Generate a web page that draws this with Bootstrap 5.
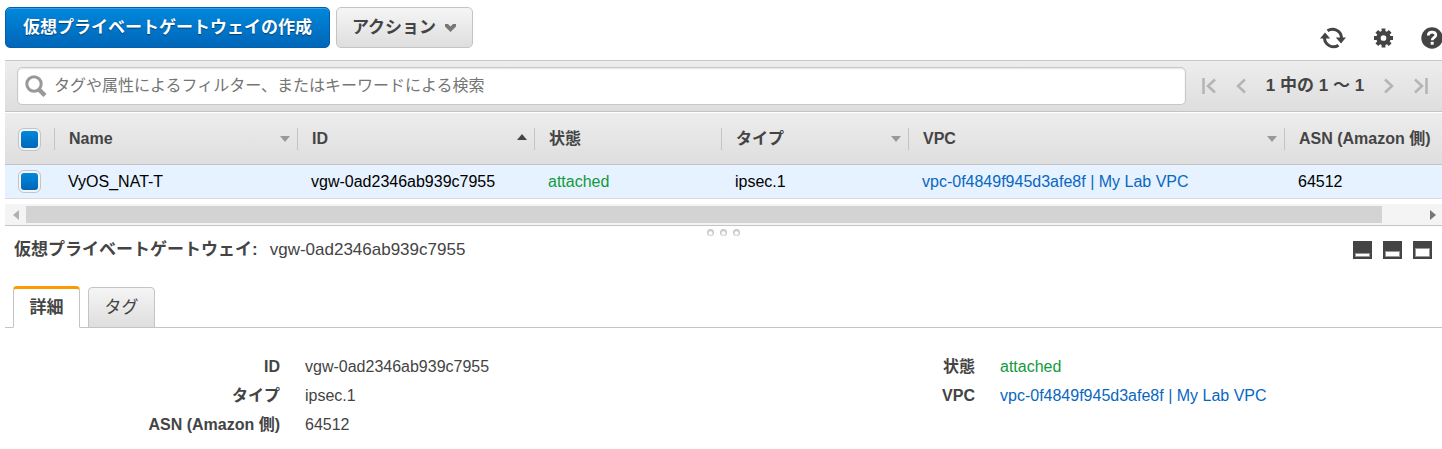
<!DOCTYPE html>
<html lang="ja">
<head>
<meta charset="utf-8">
<meta name="viewport" content="width=device-width, initial-scale=1">
<title>仮想プライベートゲートウェイ</title>
<link href="https://cdn.jsdelivr.net/npm/bootstrap@5.3.0/dist/css/bootstrap.min.css" rel="stylesheet">
<style>
  body { font-family: "Liberation Sans", "Noto Sans CJK JP", sans-serif; font-size: 16px; line-height: 22px; color: #444; background: #fff; overflow-x: hidden; }
  a { color: #0a67bf; text-decoration: none; }
  a:hover { text-decoration: underline; }
  svg { display: block; }
  .console { padding-left: 5px; }
  .topbar { padding-top: 7px; height: 60px; }
  .topbar .btn { height: 41px; font-size: 17px; font-weight: 700; line-height: 22px; border-radius: 5px; padding: 0; }
  .btn-create { width: 325px; color: #fff; background: linear-gradient(#0088dc, #0066b8); border: 1px solid #005fae; box-shadow: inset 0 1px 0 #3a9ee0; text-shadow: 0 1px 1px #00407a; }
  .btn-create:hover { color: #fff; background: #0066b8; }
  .btn-action { width: 137px; color: #444; background: linear-gradient(#f5f5f5, #dedede); border: 1px solid #c4c4c4; }
  .icon-btn { border: 0; padding: 0; background: none; color: #444; }
  .tools { gap: 28px; padding-top: 20px; }
  .filterbar { height: 52px; padding-left: 12px; background: linear-gradient(#ededed, #dedede); border-top: 1px solid #c8c8c8; border-bottom: 1px solid #c4c4c4; }
  .search-box { height: 38px; background: #fff; border: 1px solid #c8c8c8; border-radius: 5px; padding-left: 7px; gap: 7px; box-shadow: inset 0 1px 2px #e4e4e4; }
  .search-box input { border: 0; outline: 0; background: none; color: #444; padding: 0; }
  .search-box input::placeholder { color: #757575; opacity: 1; }
  .pager { width: 256px; padding: 0 14px 0 16px; font-size: 17px; font-weight: 700; }
  .pager .icon-btn { color: #b4b4b4; }
  .grid-table { table-layout: fixed; min-width: 1437px; margin-top: 1px; width: 100%; border-collapse: separate; border-spacing: 0; }
  .grid-table th { height: 52px; padding: 0; background: linear-gradient(#ededed, #dedede); border-bottom: 1px solid #c4c4c4; vertical-align: middle; }
  .grid-table td { height: 34px; padding: 0 0 0 13px; color: #000; background: #e6f2ff; border-bottom: 1px solid #d8dce2; vertical-align: middle; }
  .head-cell { height: 22px; padding: 0 7px 0 14px; border-right: 1px solid #c4c4c4; box-shadow: 1px 0 0 #fff; }
  th:last-child .head-cell { border: 0; box-shadow: none; padding-right: 0; white-space: nowrap; }
  .col-pick { width: 50px; } .col-name { width: 243px; } .col-id { width: 237px; }
  .col-mid { width: 187px; } .col-vpc { width: 376px; }
  .pick { appearance: none; display: block; width: 23px; height: 23px; margin: 0; padding: 2px; border: 1px solid #c4c4c4; border-radius: 6px; background: linear-gradient(#f4f4f4, #f4f4f4) padding-box; }
  .pick:checked { background: linear-gradient(#0088dc, #0066b8) content-box, linear-gradient(#f4f4f4, #f4f4f4) padding-box; }
  .head-cell.pick-cell, .grid-table td.pick-cell { padding-left: 13px; }
  .state-ok, .grid-table td.state-ok { color: #129a3c; }
  .scroller { height: 22px; margin-top: 5px; background: #f4f4f4; border-bottom: 1px solid #c4c4c4; }
  .scroller .icon-btn { width: 21px; }
  .scroller .icon-btn:last-child { width: 18px; }
  .thumb { width: 97%; height: 17px; background: #d3d3d3; }
  .splitter { height: 13px; gap: 6px; }
  .splitter i { width: 7px; height: 7px; border-radius: 4px; background: radial-gradient(circle at 50% 60%, #fff 1px, #c6c6c6 3px); }
  .detail-title { height: 22px; font-size: 17px; padding: 0 10px 0 9px; }
  .detail-title h1 { font-size: 17px; line-height: 22px; font-weight: 700; }
  .detail-name { gap: 12px; }
  .detail-tabs { margin-top: 25px; padding-left: 8px; gap: 8px; border-bottom: 1px solid #c4c4c4; }
  .detail-tabs .nav-link { width: 67px; height: 41px; padding: 0; text-align: center; font-size: 17px; color: #444; margin-top: 1px; margin-bottom: -1px; border: 1px solid #c4c4c4; border-radius: 4px 4px 0 0; background: linear-gradient(#f5f5f5, #dedede); }
  .detail-tabs .nav-link.active { height: 42px; margin-top: 0; font-weight: 700; color: #444; background: #fff; border-color: #c4c4c4; border-bottom-color: #fff; border-top: 3px solid #f90; }
  .detail-body { display: grid; grid-template-columns: 695fr 742fr; margin-top: 24px; }
  .detail-body dl { display: grid; grid-template-columns: 275px 1fr; column-gap: 25px; line-height: 29px; grid-auto-rows: 29px; align-content: start; }
  .detail-body dt { text-align: right; }
  .detail-body dd { margin: 0; }
</style>
</head>
<body>
<main class="console">
  <header class="topbar d-flex justify-content-between align-items-start">
    <div class="d-flex" style="gap:6px">
      <button type="button" class="btn btn-create">仮想プライベートゲートウェイの作成</button>
      <button type="button" class="btn btn-action d-flex align-items-center justify-content-center gap-2">アクション
        <svg width="13" height="9" viewBox="0 0 13 9"><path d="M1 1h3l2.500 2.500L9 1h3v2.500L6.500 9 1 3.500z" fill="#777"/></svg>
      </button>
    </div>
    <div class="tools d-flex align-items-center">
      <button type="button" class="icon-btn" aria-label="更新">
        <svg width="26" height="22" viewBox="0 0 26 22"><g fill="none" stroke="#444" stroke-width="3"><path d="M7.500 3.800A9 9 0 0 1 21.500 11"/><path d="M18.500 18.200A9 9 0 0 1 4.500 11"/></g><path d="M15.800 10.500H26l-5 6zM10.200 11.500H0l5-6z" fill="#444"/></svg>
      </button>
      <button type="button" class="icon-btn" aria-label="設定">
        <svg width="19" height="20" viewBox="0 0 20 20"><path fill="#444" fill-rule="evenodd" d="M8 0h4v2.700l1.600.7 2-1.900 2.900 2.900-1.900 2 .7 1.600H20v4h-2.700l-.7 1.600 1.900 2-2.900 2.900-2-1.900-1.600.7V20H8v-2.700l-1.600-.7-2 1.900-2.900-2.900 1.900-2L2.700 12H0V8h2.700l.7-1.600-1.900-2 2.900-2.900 2 1.900L8 2.700zM10 7a3 3 0 1 0 0 6 3 3 0 0 0 0-6z"/></svg>
      </button>
      <button type="button" class="icon-btn" aria-label="ヘルプ">
        <svg width="21" height="22" viewBox="0 0 21 22"><circle cx="11" cy="11" r="10.700" fill="#444"/><path d="M7.300 8.600C7.300 3.900 14.800 4 14.800 8c0 2.700-3.600 2.700-3.600 5.300" fill="none" stroke="#fff" stroke-width="2.800"/><path d="M9.700 14.800h3v2.900h-3z" fill="#fff"/></svg>
      </button>
    </div>
  </header>

  <section class="filterbar d-flex align-items-center">
    <label class="search-box d-flex align-items-center flex-grow-1">
      <svg width="22" height="24" viewBox="0 0 22 24"><circle cx="9" cy="10" r="7.200" fill="none" stroke="#999" stroke-width="3"/><path d="M14 15.500l6 6" stroke="#999" stroke-width="4.500"/></svg>
      <input type="search" class="flex-grow-1" aria-label="フィルター" placeholder="タグや属性によるフィルター、またはキーワードによる検索">
    </label>
    <nav class="pager d-flex align-items-center justify-content-between" aria-label="ページ">
      <button type="button" class="icon-btn" aria-label="最初"><svg width="14" height="16" viewBox="0 0 14 16" fill="none" stroke="currentColor" stroke-width="2.500"><path d="M1.500 0v16M13 1.500L6 8l7 6.500"/></svg></button>
      <button type="button" class="icon-btn" aria-label="前"><svg width="10" height="16" viewBox="0 0 10 16" fill="none" stroke="currentColor" stroke-width="2.500"><path d="M9 1.500L2 8l7 6.500"/></svg></button>
      <span>1 中の 1 ～ 1</span>
      <button type="button" class="icon-btn" aria-label="次"><svg width="10" height="16" viewBox="0 0 10 16" fill="none" stroke="currentColor" stroke-width="2.500"><path d="M1 1.500L8 8l-7 6.500"/></svg></button>
      <button type="button" class="icon-btn" aria-label="最後"><svg width="14" height="16" viewBox="0 0 14 16" fill="none" stroke="currentColor" stroke-width="2.500"><path d="M12.500 0v16M1 1.500L8 8l-7 6.500"/></svg></button>
    </nav>
  </section>

  <div class="overflow-hidden">
    <table class="grid-table">
      <colgroup><col class="col-pick"><col class="col-name"><col class="col-id"><col class="col-mid"><col class="col-mid"><col class="col-vpc"><col></colgroup>
      <thead>
        <tr>
          <th><div class="head-cell pick-cell"><input type="checkbox" class="pick" checked aria-label="すべて選択"></div></th>
          <th><div class="head-cell d-flex align-items-center justify-content-between">Name<svg width="10" height="6"><path d="M0 0h10L5 6z" fill="#999"/></svg></div></th>
          <th><div class="head-cell d-flex align-items-center justify-content-between">ID<svg width="10" height="10"><path d="M0 6h10L5 0z" fill="#444"/></svg></div></th>
          <th><div class="head-cell d-flex align-items-center">状態</div></th>
          <th><div class="head-cell d-flex align-items-center justify-content-between">タイプ<svg width="10" height="6"><path d="M0 0h10L5 6z" fill="#999"/></svg></div></th>
          <th><div class="head-cell d-flex align-items-center justify-content-between">VPC<svg width="10" height="6"><path d="M0 0h10L5 6z" fill="#999"/></svg></div></th>
          <th><div class="head-cell d-flex align-items-center">ASN (Amazon 側)</div></th>
        </tr>
      </thead>
      <tbody>
        <tr>
          <td class="pick-cell"><input type="checkbox" class="pick" checked aria-label="VyOS_NAT-T を選択"></td>
          <td>VyOS_NAT-T</td>
          <td>vgw-0ad2346ab939c7955</td>
          <td class="state-ok">attached</td>
          <td>ipsec.1</td>
          <td><a href="#">vpc-0f4849f945d3afe8f | My Lab VPC</a></td>
          <td>64512</td>
        </tr>
      </tbody>
    </table>
  </div>

  <div class="scroller d-flex align-items-center">
    <button type="button" class="icon-btn d-flex justify-content-center" aria-label="左へ"><svg width="6" height="10"><path d="M6 0v10L0 5z" fill="#b0b0b0"/></svg></button>
    <div class="flex-grow-1"><div class="thumb"></div></div>
    <button type="button" class="icon-btn d-flex justify-content-center" aria-label="右へ"><svg width="6" height="10"><path d="M0 0v10l6-5z" fill="#777"/></svg></button>
  </div>

  <div class="splitter d-flex align-items-center justify-content-center"><i></i><i></i><i></i></div>

  <section>
    <div class="detail-title d-flex align-items-center justify-content-between">
      <div class="detail-name d-flex"><h1 class="m-0">仮想プライベートゲートウェイ:</h1><span>vgw-0ad2346ab939c7955</span></div>
      <div class="d-flex" style="gap:11px">
        <button type="button" class="icon-btn" aria-label="最小化"><svg width="19" height="18"><path d="M0 0h19v18H0z" fill="#444"/><path d="M2.500 12.500h14v3h-14z" fill="#fff" stroke="#999"/></svg></button>
        <button type="button" class="icon-btn" aria-label="半分"><svg width="19" height="18"><path d="M0 0h19v18H0z" fill="#444"/><path d="M2.500 10.500h14v5h-14z" fill="#fff" stroke="#999"/></svg></button>
        <button type="button" class="icon-btn" aria-label="最大化"><svg width="19" height="18"><path d="M0 0h19v18H0z" fill="#444"/><path d="M2.500 7.500h14v8h-14z" fill="#fff" stroke="#999"/></svg></button>
      </div>
    </div>

    <div class="nav detail-tabs" role="tablist">
      <button type="button" class="nav-link active" role="tab" aria-selected="true">詳細</button>
      <button type="button" class="nav-link" role="tab" aria-selected="false">タグ</button>
    </div>

    <div class="detail-body">
      <dl class="m-0">
        <dt>ID</dt><dd>vgw-0ad2346ab939c7955</dd>
        <dt>タイプ</dt><dd>ipsec.1</dd>
        <dt>ASN (Amazon 側)</dt><dd>64512</dd>
      </dl>
      <dl class="m-0">
        <dt>状態</dt><dd class="state-ok">attached</dd>
        <dt>VPC</dt><dd><a href="#">vpc-0f4849f945d3afe8f | My Lab VPC</a></dd>
      </dl>
    </div>
  </section>
</main>
<script src="https://cdn.jsdelivr.net/npm/bootstrap@5.3.0/dist/js/bootstrap.bundle.min.js"></script>
</body>
</html>
